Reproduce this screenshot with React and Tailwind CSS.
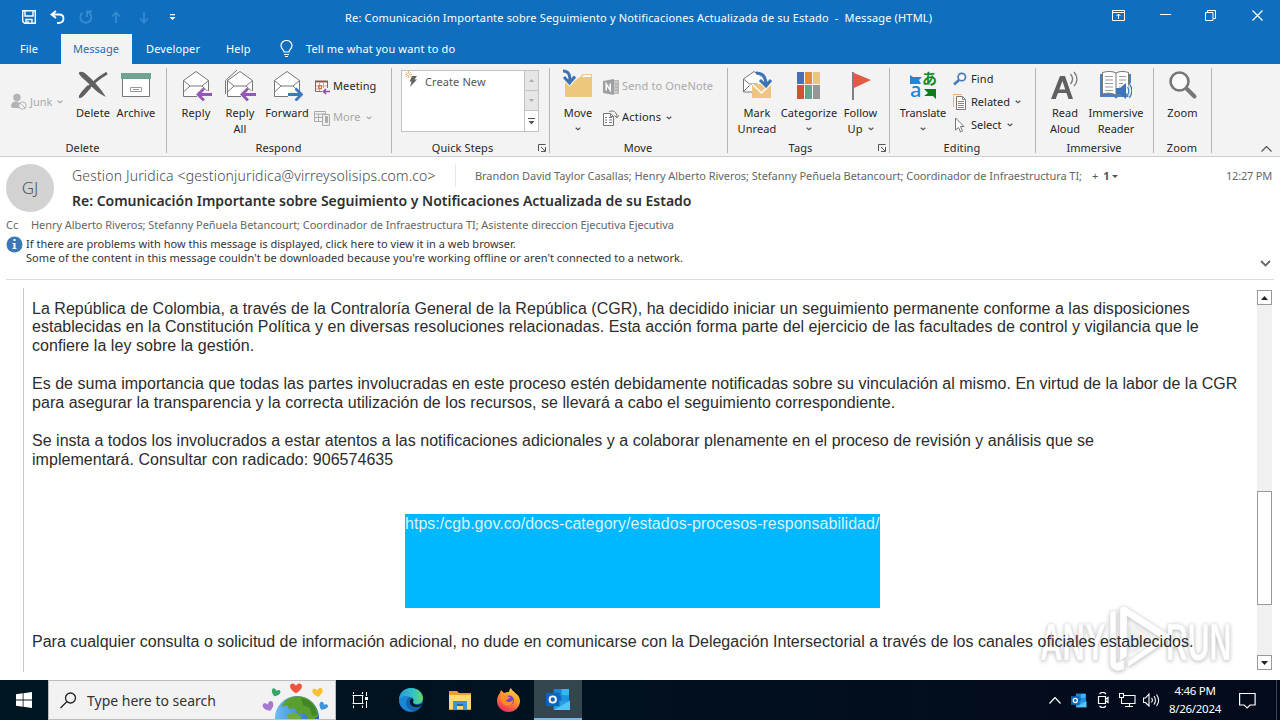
import React from "react";
import clsx from "clsx";

function Caret({ className }) {
  return (
    <svg className={clsx("shrink-0", className)} width="6" height="4" viewBox="0 0 6 4" fill="none" stroke="currentColor" strokeWidth="1.200">
      <path d="M.7.700L3 2.800 5.300.7" />
    </svg>
  );
}

function Launcher() {
  return (
    <svg width="8" height="8" viewBox="0 0 8 8" fill="none" stroke="#555" strokeWidth="1">
      <path d="M.5 7V.5H7.500M3 3l4 4M7.500 3v4.500H3" />
    </svg>
  );
}

function Group({ label, launcher, className, children }) {
  return (
    <div className={clsx("relative flex h-[92px] shrink-0 flex-col", className)}>
      <div className="flex h-[76px] pt-[5px]">{children}</div>
      <div className={clsx("flex h-4 items-center justify-center leading-4", launcher ? "pr-[17px]" : "pr-[2px]")}>{label}</div>
      {launcher && <div className="absolute bottom-[4px] right-[4px]"><Launcher /></div>}
      <div className="absolute right-0 top-1 h-[85px] w-px bg-[#b5b5b5]" />
    </div>
  );
}

function BigButton({ icon, lines, caret, className }) {
  return (
    <div className={clsx("flex shrink-0 flex-col items-center whitespace-nowrap leading-4", className)}>
      <div className="flex h-9 w-8 items-start justify-center">{icon}</div>
      {lines.map((line, i) => (
        <div key={i}>{line}</div>
      ))}
      {caret && <Caret className="mt-[6px] text-[#555]" />}
    </div>
  );
}

function SmallButton({ icon, text, caret, disabled, className }) {
  return (
    <div className={clsx("flex items-center whitespace-nowrap", disabled ? "text-[#a9a9a9]" : "text-[#262626]", className)}>
      <div className="mr-[3px] flex w-4 shrink-0 justify-center">{icon}</div>
      {text}
      {caret && <Caret className={clsx("ml-[5px]", disabled ? "text-[#aaa]" : "text-[#555]")} />}
    </div>
  );
}

function Envelope({ all, forward }) {
  return (
    <svg width="32" height="32" viewBox="0 0 32 32" fill="none">
      {all && <path d="M1.500 25V11.500L13 1" stroke="#777" />}
      <path d="M3.500 11.500L16 2.500l12.500 9V27.500h-25z" fill="#fff" stroke="#777" />
      <path d="M3.500 11.500L10 17h12l6.500-5.500M10 17l-6.500 6M22 17l6.500 6" stroke="#777" />
      <path d="M17 22h15v9H17z" fill="#f3f3f3" />
      {forward ? (
        <path d="M17 25.500h13M24.500 19.500l6 6-6 6" stroke="#3c7abf" strokeWidth="2.800" />
      ) : (
        <path d="M32 25.500H19M24 19.500l-6 6 6 6" stroke="#9359b5" strokeWidth="2.800" />
      )}
    </svg>
  );
}

function DeleteIcon() {
  return (
    <svg width="32" height="32" viewBox="0 0 32 32">
      <path d="M2 5C1 2 6 2 9 5c8 7 14 14 20 23-8-4-12-8-17-13C8 11 5 9 2 5z" fill="#606060" />
      <path d="M3 28C12 18 18 11 30 4" fill="none" stroke="#606060" strokeWidth="2.800" />
      <path d="M2 29c-1-3 4-8 9-13l3 3c-5 5-8 10-12 10z" fill="#606060" />
    </svg>
  );
}

function ArchiveIcon() {
  return (
    <svg width="32" height="32" viewBox="0 0 32 32" fill="none">
      <path d="M2.500 9v18.500h27V9" fill="#fff" stroke="#777" />
      <path d="M1 4h30v6H1z" fill="#6fa392" />
      <path d="M10.500 18.500h11v4h-11zM13 20.500h6" stroke="#999" />
    </svg>
  );
}

function JunkIcon() {
  return (
    <svg width="16" height="18" viewBox="0 0 16 18" fill="#b3b3b3">
      <circle cx="6" cy="4.500" r="3.700" />
      <path d="M0 13c0-3 2-4.500 5-4.500 2 0 3 .5 3 2V15H1z" />
      <circle cx="11.500" cy="12.500" r="3.700" fill="#f3f3f3" stroke="#b3b3b3" />
      <path d="M9 10l5 5" stroke="#b3b3b3" />
    </svg>
  );
}

function MeetingIcon() {
  return (
    <svg width="16" height="16" viewBox="0 0 16 16" fill="none">
      <path d="M1.500 2.500h12v10h-12z" fill="#fff" stroke="#7d6a60" />
      <path d="M1 2.500h13" stroke="#8c5a4a" strokeWidth="2" />
      <path d="M5.500 4v8M9.500 4v8M2 7h11M2 10h11" stroke="#c4a598" />
      <path d="M4.500 6.500h3v3h-3z" stroke="#df6a35" />
      <path d="M8 9h8v7H8z" fill="#f3f3f3" />
      <path d="M16 12.500H9.500M12 10l-2.500 2.500L12 15" stroke="#8c4cab" strokeWidth="1.600" />
    </svg>
  );
}

function MoreIcon() {
  return (
    <svg width="16" height="16" viewBox="0 0 16 16" fill="none" stroke="#aaa">
      <path d="M.5 1.500h11v10H.5zM.5 4h11M4.500 4v7M.5 7.500h9" />
      <path d="M8.500 4.500h7v11h-7z" fill="#eee" />
      <path d="M11.500 6.500h2v6h-2z" fill="#aaa" />
    </svg>
  );
}

function BoltIcon() {
  return (
    <svg width="14" height="17" viewBox="0 0 14 17">
      <path d="M7 5h5L9.500 8.500H12L5 16l1.500-5.500H4.500z" fill="#666" />
      <path d="M3.500 0v7M0 3.500h7M1 1l5 5M6 1L1 6" stroke="#e3a64f" strokeWidth=".8" />
      <circle cx="3.500" cy="3.500" r="1.300" fill="#fff" />
    </svg>
  );
}

function MoveIcon() {
  return (
    <svg width="32" height="32" viewBox="0 0 32 32" fill="none">
      <path d="M3 9h14l4-4h9v23H3z" fill="#edc77b" />
      <path d="M20 8l2-2h7v2z" fill="#fff" />
      <path d="M1 2c6 0 7 4 7 11M2 8l5.500 6L14 7.500" stroke="#f3f3f3" strokeWidth="5" />
      <path d="M1 2c6 0 7 4 7 11M2 8l5.500 6L13 7.500" stroke="#3c73b4" strokeWidth="3" />
    </svg>
  );
}

function OneNoteIcon() {
  return (
    <svg width="16" height="16" viewBox="0 0 16 16" fill="none">
      <path d="M7 1.500h8.500v13H7" fill="#c9c9c9" stroke="#b5b5b5" />
      <path d="M12 5h3.500M12 8h3.500M12 11h3.500" stroke="#a5a5a5" />
      <path d="M0 2l11-2v16L0 14z" fill="#a0a0a0" />
      <path d="M3.200 11.500V5l4 6V4.500" stroke="#fff" strokeWidth="1.500" />
    </svg>
  );
}

function ActionsIcon() {
  return (
    <svg width="16" height="16" viewBox="0 0 16 16" fill="none" stroke="#777">
      <path d="M.5 3.500h7l3 3v9H.5z" fill="#fff" />
      <path d="M7.500 3.500v3h3M2 7.500h2M6 7.500h3M2 10h2M6 10h3M2 12.500h2M6 12.500h3M6 1.500c4-1.500 8 0 8 6M11.500 5.500l2.500 2.500 2-3" />
    </svg>
  );
}

function MarkUnreadIcon() {
  return (
    <svg width="32" height="32" viewBox="0 0 32 32" fill="none">
      <path d="M2.500 10L13 2.500 24 10v10l-9 3H2.500z" fill="#fff" stroke="#777" />
      <path d="M2.500 10l6 5h8M2.500 22.500l6-6" stroke="#777" />
      <path d="M11 15h19v14H11z" fill="#edc481" />
      <path d="M11 15l9.500 9 9.500-9" stroke="#fff" strokeWidth="1.500" />
      <path d="M16 4c6 0 9 4 9 12M19 11l6 6 5-6" stroke="#f3f3f3" strokeWidth="5" />
      <path d="M15 4c7 0 10 4 10 12M19 11l6 6 5-6" stroke="#3c73b4" strokeWidth="3" />
    </svg>
  );
}

function CategorizeIcon() {
  return (
    <svg width="24" height="30" viewBox="0 0 24 30">
      <path d="M0 3h7v12H0z" fill="#4672ad" />
      <path d="M8 3h7v12H8z" fill="#e78a39" />
      <path d="M16 3h7v12h-7z" fill="#ebc67b" />
      <path d="M0 16h7v14H0z" fill="#d0503a" />
      <path d="M8 16h7v14H8z" fill="#68a28e" />
      <path d="M16 16h7v14h-7z" fill="#969696" />
    </svg>
  );
}

function FlagIcon() {
  return (
    <svg width="22" height="31" viewBox="0 0 22 31">
      <path d="M2 3h2v28H2z" fill="#808080" />
      <path d="M4 4l17 7-17 8z" fill="#e15a42" />
    </svg>
  );
}

function TranslateIcon() {
  return (
    <div className="relative h-8 w-8 shrink-0 leading-none">
      <span className="absolute left-[15px] top-[1px] font-['Noto_Sans_CJK_JP',sans-serif] text-[15px] font-bold text-[#118a24]">あ</span>
      <span className="absolute left-[3px] top-[11px] text-[20px] font-medium text-[#1e84e0]">a</span>
      <svg className="absolute left-0 top-0" width="32" height="32" viewBox="0 0 32 32">
        <path d="M3 6l3 2h9l-3 3 2 4H3z" fill="#1e84e0" />
        <path d="M17 20h12v10l-3-3h-9l4-3z" fill="#0c7d1e" />
      </svg>
    </div>
  );
}

function FindIcon() {
  return (
    <svg width="14" height="14" viewBox="0 0 14 14" fill="none" stroke="#457bb9" strokeWidth="1.700">
      <circle cx="8.800" cy="5" r="3.700" fill="#fff" />
      <path d="M6 8L1 12.500" strokeWidth="2.500" />
    </svg>
  );
}

function RelatedIcon() {
  return (
    <svg width="14" height="16" viewBox="0 0 14 16" fill="none">
      <path d="M.5 13V.5H9" stroke="#e7b27e" />
      <path d="M3.500 2.500h6l3 3v10h-9z" fill="#fff" stroke="#777" />
      <path d="M9.500 2.500v3h3M5 7.500h6M5 9.500h6M5 11.500h6M5 13.500h6" stroke="#888" />
    </svg>
  );
}

function SelectIcon() {
  return (
    <svg width="12" height="16" viewBox="0 0 12 16">
      <path d="M1.500 1v12l3-2.500 2 4.500 2-1-2-4.500H10z" fill="#fff" stroke="#777" />
    </svg>
  );
}

function ReadAloudIcon() {
  return (
    <svg width="32" height="32" viewBox="0 0 32 32" fill="none">
      <path d="M2 30L11 7h5l8 23h-4.500l-2-6H9l-2.300 6zM10.300 20.500h6L13.400 12z" fill="#606060" fillRule="evenodd" />
      <path d="M21.500 5c2.500 3 2.500 7 0 10M25 3c4 4.500 4 10 0 14" stroke="#777" strokeWidth="1.300" />
    </svg>
  );
}

function ReaderIcon() {
  return (
    <svg width="32" height="32" viewBox="0 0 32 32" fill="none">
      <path d="M0 5h31v23H18l-2 1.500L14 28H0z" fill="#4a80bd" />
      <path d="M2.500 3.500c5-1.500 10-1.500 13.500.5C19.500 2 24 2 28.500 3.500V25c-5-1.500-9-1-12.500 1-4-2-8.500-2.500-13.500-1z" fill="#fff" stroke="#777" />
      <path d="M16 4v22" stroke="#777" />
      <path d="M5 7.500h8M5 11h8M5 14.500h8M5 18h8M5 21.500h8M19 7.500h7M19 11h7M19 14.500h4M19 18h1" stroke="#999" />
      <path d="M16 19h4l6-5v16l-6-5h-4z" fill="#3d75b6" />
      <path d="M27.500 18c2 3 2 5 0 8M29.500 15c3 4 3 9 0 14" stroke="#f3f3f3" strokeWidth="3" />
      <path d="M27.500 18c2 3 2 5 0 8M29.500 15c3 4 3 9 0 14" stroke="#3d75b6" strokeWidth="1.200" />
    </svg>
  );
}

function ZoomIcon() {
  return (
    <svg width="32" height="32" viewBox="0 0 32 32" fill="none" stroke="#777">
      <path d="M20 20l7.500 7.500" strokeWidth="4" strokeLinecap="round" />
      <circle cx="12.500" cy="12.500" r="9" fill="#fafafa" strokeWidth="2.600" />
    </svg>
  );
}

function OutlookIcon({ className }) {
  return (
    <svg className={className} viewBox="0 0 26 24" fill="none">
      <path d="M8 1h16v19H8z" fill="#1467b4" />
      <path d="M8 1h8v7H8z" fill="#1d83d4" />
      <path d="M16 1h8v7h-8z" fill="#37b6f2" />
      <path d="M16 8h8v7h-8z" fill="#1c93e2" />
      <path d="M8 12l17 3v8H8z" fill="#2c9ce0" />
      <path d="M8 23l17-10v10z" fill="#54c4f5" />
      <path d="M0 5h14v14H0z" fill="#0b65b8" />
      <circle cx="7" cy="12" r="3.300" stroke="#fff" strokeWidth="2" />
    </svg>
  );
}

function TitleBar() {
  return (
    <div className="flex h-[34px] items-center text-white">
      <div className="flex w-[345px] shrink-0 items-center pl-[22px]">
        <svg width="14" height="14" viewBox="0 0 14 14" fill="none" stroke="#fff" strokeWidth="1.400">
          <path d="M.7.700h12.600v12.600H2.500L.7 11.500zM3 1v5h8V1M4 13V9.500h6V13M6 11v2" />
        </svg>
        <svg className="ml-[14px]" width="15" height="15" viewBox="0 0 15 15" fill="none" stroke="#fff" strokeWidth="1.800">
          <path d="M6 1L1.500 4.500 6 8M2 4.500h7c6 0 6 8 0 8.500H7" />
        </svg>
        <svg className="ml-[14px] text-[#398bd0]" width="14" height="14" viewBox="0 0 14 14" fill="none" stroke="currentColor" strokeWidth="1.800">
          <path d="M8.500 2A5.500 5.500 0 1 1 3.500 2.800M8 7V1.500h5" />
        </svg>
        <svg className="ml-[18px] text-[#398bd0]" width="10" height="13" viewBox="0 0 10 13" fill="none" stroke="currentColor" strokeWidth="1.700">
          <path d="M5 12V1.500M1 5.500l4-4 4 4" />
        </svg>
        <svg className="ml-[18px] text-[#398bd0]" width="10" height="13" viewBox="0 0 10 13" fill="none" stroke="currentColor" strokeWidth="1.700">
          <path d="M5 1v10.500M1 7.500l4 4 4-4" />
        </svg>
        <svg className="ml-[20px]" width="7" height="7" viewBox="0 0 7 7" fill="#fff">
          <path d="M1 0h5v1.200H1zM.5 3h6l-3 3z" />
        </svg>
      </div>
      <div className="w-[767px] shrink-0 whitespace-pre pt-[2px] text-[11px] tracking-[0.165px]">
        Re: Comunicación Importante sobre Seguimiento y Notificaciones Actualizada de su Estado  -  Message (HTML)
      </div>
      <svg className="mb-1" width="13" height="11" viewBox="0 0 13 11" fill="none" stroke="#fff">
        <path d="M.5.500h12v10H.5zM.5 2.500h12M6.500 9V4M4.500 6l2-2 2 2" />
      </svg>
      <div className="mb-[5px] ml-[35px] h-px w-[11px] bg-white" />
      <svg className="mb-1 ml-[34px]" width="11" height="11" viewBox="0 0 11 11" fill="none" stroke="#fff">
        <path d="M.5 2.500h7.500v8H.5zM2.500 2.500v-2h8v8H8.500" />
      </svg>
      <svg className="mb-1 ml-[36px]" width="11" height="11" viewBox="0 0 11 11" fill="none" stroke="#fff" strokeWidth="1.200">
        <path d="M.5.500l10 10M10.500.500l-10 10" />
      </svg>
    </div>
  );
}

function Tabs() {
  return (
    <div className="flex h-[30px] whitespace-nowrap text-[11px] leading-[30px] tracking-[0.15px] text-white">
      <div className="w-[61px] pl-[20px]">File</div>
      <div className="w-[71px] bg-[#f3f3f3] pr-px text-center text-[#1f6cb4] tracking-normal">Message</div>
      <div className="w-[94px] pl-[14px]">Developer</div>
      <div className="w-[54px]">Help</div>
      <svg className="mt-[6px]" width="13" height="18" viewBox="0 0 13 18" fill="none" stroke="#fff" strokeWidth="1.200">
        <path d="M4 12c0-2.500-3-3-3-6.500a5.500 5 0 0 1 11 0C12 9 9 9.500 9 12zM4 14.500h5M5 16.500h3" />
      </svg>
      <div className="pl-[13px]">Tell me what you want to do</div>
    </div>
  );
}

function Ribbon() {
  return (
    <div className="flex h-[93px] border-b border-[#d0d0d0] bg-[#f3f3f3] text-[11px] tracking-[0.1px] text-[#262626]">
      <Group label="Delete" className="w-[167px]">
        <SmallButton icon={<JunkIcon />} text="Junk" caret disabled className="mt-[-5px] w-[59px] pl-[11px] tracking-normal" />
        <BigButton icon={<DeleteIcon />} lines={["Delete"]} className="ml-[12px] w-[44px]" />
        <BigButton icon={<ArchiveIcon />} lines={["Archive"]} className="ml-[-1px] w-[44px]" />
      </Group>
      <Group label="Respond" className="w-[225px]">
        <BigButton icon={<Envelope />} lines={["Reply"]} className="ml-[7px] w-[44px]" />
        <BigButton icon={<Envelope all />} lines={["Reply", "All"]} className="w-[44px]" />
        <BigButton icon={<Envelope forward />} lines={["Forward"]} className="w-[50px]" />
        <div className="ml-[2px] flex flex-col pt-[2px]">
          <SmallButton icon={<MeetingIcon />} text="Meeting" className="h-[31px]" />
          <SmallButton icon={<MoreIcon />} text="More" caret disabled className="h-[31px]" />
        </div>
      </Group>
      <Group label="Quick Steps" launcher className="w-[158px]">
        <div className="ml-[9px] mt-px flex h-[62px] w-[138px] border border-[#c3c3c3] bg-white">
          <div className="flex flex-1 items-start pl-[3px] text-[#555]">
            <BoltIcon />
            <span className="ml-[6px] mt-[3px] whitespace-nowrap leading-4">Create New</span>
          </div>
          <div className="flex w-[14px] flex-col border-l border-[#c3c3c3]">
            <div className="flex h-[20px] items-center justify-center border-b border-[#c3c3c3] bg-[#e6e6e6]">
              <svg width="5" height="3" viewBox="0 0 5 3" fill="#aaa"><path d="M0 3L2.500 0 5 3z" /></svg>
            </div>
            <div className="flex h-[20px] items-center justify-center border-b border-[#c3c3c3] bg-[#e6e6e6]">
              <svg width="5" height="3" viewBox="0 0 5 3" fill="#aaa"><path d="M0 0h5L2.500 3z" /></svg>
            </div>
            <div className="flex flex-1 items-center justify-center">
              <svg width="7" height="7" viewBox="0 0 7 7" fill="#555"><path d="M0 0h7v1H0zM.5 3h6l-3 3.500z" /></svg>
            </div>
          </div>
        </div>
      </Group>
      <Group label="Move" className="w-[178px]">
        <BigButton icon={<MoveIcon />} lines={["Move"]} caret className="ml-[8px] w-[40px]" />
        <div className="ml-[5px] flex flex-col pt-[2px]">
          <SmallButton icon={<OneNoteIcon />} text="Send to OneNote" disabled className="h-[31px] tracking-[0.15px]" />
          <SmallButton icon={<ActionsIcon />} text="Actions" caret className="h-[31px] tracking-[0.2px]" />
        </div>
      </Group>
      <Group label="Tags" launcher className="w-[162px]">
        <BigButton icon={<MarkUnreadIcon />} lines={["Mark", "Unread"]} className="ml-[7px] w-[44px]" />
        <BigButton icon={<CategorizeIcon />} lines={["Categorize"]} caret className="w-[60px]" />
        <BigButton
          icon={<FlagIcon />}
          lines={["Follow", <span className="flex items-center gap-[5px]">Up <Caret className="text-[#555]" /></span>]}
          className="w-[43px]"
        />
      </Group>
      <Group label="Editing" className="w-[146px]">
        <BigButton icon={<TranslateIcon />} lines={["Translate"]} caret className="ml-[8px] w-[50px] tracking-[-0.1px]" />
        <div className="ml-[4px] flex flex-col">
          <SmallButton icon={<FindIcon />} text="Find" className="h-[20px]" />
          <SmallButton icon={<RelatedIcon />} text="Related" caret className="mt-[3px] h-[20px] tracking-normal" />
          <SmallButton icon={<SelectIcon />} text="Select" caret className="mt-[3px] h-[20px] tracking-normal" />
        </div>
      </Group>
      <Group label="Immersive" className="w-[118px] tracking-normal">
        <BigButton icon={<ReadAloudIcon />} lines={["Read", "Aloud"]} className="ml-[9px] w-[40px]" />
        <BigButton icon={<ReaderIcon />} lines={["Immersive", "Reader"]} className="w-[62px]" />
      </Group>
      <Group label="Zoom" className="w-[58px]">
        <BigButton icon={<ZoomIcon />} lines={["Zoom"]} className="w-[57px]" />
      </Group>
      <div className="flex flex-1 items-end justify-end pb-[4px] pr-[8px]">
        <svg width="11" height="6" viewBox="0 0 11 6" fill="none" stroke="#555" strokeWidth="1.200">
          <path d="M.5 5.500l5-5 5 5" />
        </svg>
      </div>
    </div>
  );
}

function MessageHeader() {
  return (
    <div className="flex h-[123px] flex-col whitespace-nowrap text-[11px] text-[#666]">
      <div className="flex h-[60px]">
        <div className="ml-[6px] mt-[7px] flex h-12 w-12 items-center justify-center rounded-full bg-[#d2d2d2] text-[17px] font-light text-[#555]">
          GJ
        </div>
        <div className="ml-[18px] flex-1">
          <div className="flex h-[36px] items-center">
            <div className="w-[383px] text-[14px] font-light tracking-[0.16px] text-[#4a4a4a]">
              Gestion Juridica &lt;gestionjuridica@virreysolisips.com.co&gt;
            </div>
            <div className="h-[23px] w-px bg-[#e8e8e8]" />
            <div className="w-[615px] pl-[19px] pt-[3px] tracking-[-0.055px]">
              Brandon David Taylor Casallas; Henry Alberto Riveros; Stefanny Peñuela Betancourt; Coordinador de Infraestructura TI;
            </div>
            <div className="flex items-center pl-[21px] pt-[3px] text-[#555]">
              +<b className="ml-[5px]">1</b>
              <svg className="ml-[2px]" width="6" height="4" viewBox="0 0 6 4" fill="#555"><path d="M0 0h6L3 3z" /></svg>
            </div>
            <div className="ml-auto pr-[8px] pt-[3px] tracking-[-0.2px]">12:27 PM</div>
          </div>
          <div className="text-[14px] font-semibold leading-4 tracking-[-0.012px] text-[#2f2f2f]">
            Re: Comunicación Importante sobre Seguimiento y Notificaciones Actualizada de su Estado
          </div>
        </div>
      </div>
      <div className="flex h-[16px] items-center pl-[6px]">
        <div className="w-[25px]">Cc</div>
        <div className="tracking-[-0.055px]">
          Henry Alberto Riveros; Stefanny Peñuela Betancourt; Coordinador de Infraestructura TI; Asistente direccion Ejecutiva Ejecutiva
        </div>
      </div>
      <div className="flex pl-[6px] pt-[3px] text-[#333]">
        <svg className="mr-[3px]" width="17" height="17" viewBox="0 0 17 17">
          <circle cx="8.500" cy="8.500" r="8" fill="#3c78b5" />
          <path d="M7.500 3h2v2h-2zM6.500 7h3v5h1v1h-4v-1h1V8h-1z" fill="#fff" />
        </svg>
        <div className="flex-1 pt-[1px] leading-[14px]">
          <div className="tracking-[0.012px]">If there are problems with how this message is displayed, click here to view it in a web browser.</div>
          <div className="tracking-[0.052px]">Some of the content in this message couldn't be downloaded because you're working offline or aren't connected to a network.</div>
        </div>
        <svg className="mr-[9px] mt-[24px]" width="11" height="8" viewBox="0 0 11 8" fill="none" stroke="#666" strokeWidth="1.800">
          <path d="M1 1l4.500 4.500L10 1" />
        </svg>
      </div>
      <div className="mb-0 ml-[6px] mr-[6px] mt-auto h-px bg-[#dcdcdc]" />
    </div>
  );
}

function Watermark() {
  return (
    <div className="absolute left-[1036px] top-[321px] h-[72px] w-[204px] opacity-80">
      <svg className="drop-shadow-[0_1px_2px_rgba(0,0,0,0.35)]" width="204" height="72" viewBox="0 0 204 72">
        <g fill="#fff" stroke="#e4e4e4" strokeWidth=".6" fontFamily="Liberation Sans, sans-serif" fontWeight="bold" fontSize="52">
          <text transform="translate(4 59) scale(.6 1)">ANY</text>
          <text transform="translate(130 59) scale(.58 1)">RUN</text>
          <path d="M74 63V13q0-3 3-3l3-1V62l8-3v9q-6 3-9 1-5-2-5-6z" />
          <path d="M84 60V8q1-4 6-2l42 27q3 3 0 6L92 66v-6l33-23-34-22v40z" fillRule="evenodd" />
          <path d="M95 24l20 13-20 13z" fillOpacity=".6" />
        </g>
      </svg>
    </div>
  );
}

function MessageBody() {
  return (
    <div className="relative flex h-[400px] pb-2 pt-2">
      <Watermark />
      <div className="relative ml-[23px] w-[1234px] whitespace-nowrap border-l border-[#c8c8c8] pl-[8px] pt-[11px] font-['Liberation_Sans',Arial,sans-serif] text-[16px] leading-[19px] text-[#2c2c2c]">
        <div className="h-[75px]">
          <div className="h-[18px] tracking-[0.033px]">La República de Colombia, a través de la Contraloría General de la República (CGR), ha decidido iniciar un seguimiento permanente conforme a las disposiciones</div>
          <div className="h-[19px] tracking-[0.026px]">establecidas en la Constitución Política y en diversas resoluciones relacionadas. Esta acción forma parte del ejercicio de las facultades de control y vigilancia que le</div>
          <div className="tracking-[0.05px]">confiere la ley sobre la gestión.</div>
        </div>
        <div className="h-[57px]">
          <div className="tracking-[0.018px]">Es de suma importancia que todas las partes involucradas en este proceso estén debidamente notificadas sobre su vinculación al mismo. En virtud de la labor de la CGR</div>
          <div className="tracking-[0.04px]">para asegurar la transparencia y la correcta utilización de los recursos, se llevará a cabo el seguimiento correspondiente.</div>
        </div>
        <div className="h-[83px]">
          <div className="tracking-[0.024px]">Se insta a todos los involucrados a estar atentos a las notificaciones adicionales y a colaborar plenamente en el proceso de revisión y análisis que se</div>
          <div className="tracking-[0.04px]">implementará. Consultar con radicado: 906574635</div>
        </div>
        <div className="ml-[373px] h-[94px] w-[475px] bg-[#00b8ff] tracking-[0.024px] text-[#d9f3ff]">
          htps:/cgb.gov.co/docs-category/estados-procesos-responsabilidad/
        </div>
        <div className="mt-[24px] tracking-[0.01px]">Para cualquier consulta o solicitud de información adicional, no dude en comunicarse con la Delegación Intersectorial a través de los canales oficiales establecidos.</div>
      </div>
      <div className="mt-[2px] flex h-[380px] w-[15px] flex-col bg-[#f0f0f0]">
        <div className="flex h-[15px] items-center justify-center border border-[#999] bg-white">
          <svg width="7" height="4" viewBox="0 0 7 4"><path d="M0 4l3.500-4L7 4z" fill="#222" /></svg>
        </div>
        <div className="mt-[186px] h-[114px] border border-[#999] bg-white" />
        <div className="mt-auto flex h-[15px] items-center justify-center border border-[#999] bg-white">
          <svg width="7" height="4" viewBox="0 0 7 4"><path d="M0 0h7L3.500 4z" fill="#222" /></svg>
        </div>
      </div>
    </div>
  );
}

function Globe() {
  const heart = "M0 2.500C-2-1-6 0-5 4c1 3 5 5 5 5s4-2 5-5c1-4-3-5-5-1.500z";
  return (
    <svg className="mr-[4px]" width="70" height="38" viewBox="0 0 70 38">
      <defs>
        <linearGradient id="sea" x1="0" x2="1">
          <stop offset="0" stopColor="#69bdf5" />
          <stop offset="1" stopColor="#2765bd" />
        </linearGradient>
      </defs>
      <circle cx="36" cy="37" r="22" fill="url(#sea)" />
      <path d="M24 20c6-6 17-6 23-2 6 4 10 10 10 17l-4 3h-6l-3-6-7 1-3-6-6 1-2-4-6 2z" fill="#5a9e2f" />
      <path d="M40 17c9 1 15 8 16 17l-5 1-2-8-7-3z" fill="#3f8626" />
      <path d="M26 34l7-3 6 4 2 4H28z" fill="#6fae38" />
      <path d={heart} fill="#f0533f" transform="translate(35 2) scale(1.15)" />
      <path d={heart} fill="#36a56b" transform="translate(16 8) rotate(20) scale(.85)" />
      <path d={heart} fill="#f8c22f" transform="translate(56 7) rotate(-10)" />
      <path d={heart} fill="#a679cf" transform="translate(6 21) rotate(-20) scale(1.050)" />
      <path d={heart} fill="#3895de" transform="translate(64 22) rotate(30) scale(.85)" />
    </svg>
  );
}

function Taskbar() {
  return (
    <div className="flex h-10 items-center bg-linear-to-r from-[#001721] to-[#030a1c] text-white">
      <div className="flex w-12 justify-center">
        <svg width="16" height="16" viewBox="0 0 16 16" fill="#fff">
          <path d="M0 2.300L6.700 1.300V7.500H0zM7.500 1.200L16 0v7.500H7.500zM0 8.500h6.700v6.200L0 13.700zM7.500 8.500H16V16l-8.500-1.200z" />
        </svg>
      </div>
      <div className="flex h-10 w-[288px] items-center border border-[#b9bdbf] bg-[#f2f2f2] pl-[11px] text-[#333]">
        <svg width="17" height="17" viewBox="0 0 17 17" fill="none" stroke="#222" strokeWidth="1.300">
          <circle cx="10.500" cy="6" r="5" />
          <path d="M7 9.500L.5 16" />
        </svg>
        <div className="ml-[10px] flex-1 whitespace-nowrap text-[14px]">Type here to search</div>
        <Globe />
      </div>
      <div className="flex w-[48px] justify-center">
        <svg width="17" height="16" viewBox="0 0 17 16" fill="none" stroke="#fff">
          <path d="M1.500 0v2M10.500 0v2M.5 3.500h11M1.500 4v8M10.500 4v8M.5 11.500h11M1.500 13.500V16M10.500 13.500V16M14.500 0v4M14.500 9v7" />
          <path d="M13 5h3v3h-3z" fill="#fff" stroke="none" />
        </svg>
      </div>
      <div className="flex w-[54px] justify-center">
        <svg width="24" height="24" viewBox="0 0 24 24">
          <defs>
            <linearGradient id="edge" x1="0" x2="1">
              <stop offset="0" stopColor="#229bdd" />
              <stop offset=".6" stopColor="#35c4c2" />
              <stop offset="1" stopColor="#61d66b" />
            </linearGradient>
          </defs>
          <circle cx="12" cy="12" r="12" fill="#1263ad" />
          <path d="M0 12C0 5 5 0 12 0c8 0 12 6 12 10 0 5-4 6-6 6-3 0-4-1-4-2 1-1 1-5-3-5-5-1-9 0-11 3z" fill="url(#edge)" />
          <path d="M9 10c-4 5-1 12 6 13-8 2-15-4-15-11 2-4 7-5 10-3z" fill="#1b86d4" />
          <path d="M14 14c0 3 5 4 9 1.500 0 2-3 3.500-6 3.500-5 0-8-5-5-8 2-1 3 1 2 3z" fill="#001721" />
        </svg>
      </div>
      <div className="flex w-[44px] justify-center">
        <svg width="22" height="19" viewBox="0 0 22 19">
          <path d="M0 0h8l2 2h12v17H0z" fill="#e7a22e" />
          <path d="M0 4h22v14H0z" fill="#ffda70" />
          <path d="M4 10h14v9h-4v-4H8v4H4z" fill="#3f96cf" />
          <path d="M8 13h6v2H8z" fill="#1d6ba6" />
        </svg>
      </div>
      <div className="flex w-[52px] justify-center">
        <svg width="23" height="24" viewBox="0 0 23 24">
          <defs>
            <linearGradient id="fox" x1=".8" y1="0" x2=".3" y2="1">
              <stop offset="0" stopColor="#ffe13d" />
              <stop offset=".45" stopColor="#ff9330" />
              <stop offset="1" stopColor="#ed285d" />
            </linearGradient>
          </defs>
          <path d="M3 5l1-3 3 3c2-1 4-1 5-1 0-2 1-3 2-4 1 4 9 6 9 13 0 6-5 11-11.500 11S0 19 0 13c0-3 1-6 3-8z" fill="url(#fox)" />
          <circle cx="12" cy="12.500" r="5" fill="#7a42ce" />
          <path d="M4 8c4-2 6 1 9 1-1 3-4 2-4 4 2 2 5 1 7-1 0 5-4 7-8 5-3-1-5-5-4-9z" fill="#ff8b2b" />
        </svg>
      </div>
      <div className="flex h-10 w-[48px] items-center justify-center border-b-2 border-[#76b9ed] bg-[#34454e]">
        <OutlookIcon className="h-[23px] w-[25px]" />
      </div>
      <div className="ml-auto flex h-10 items-center">
        <svg width="12" height="7" viewBox="0 0 12 7" fill="none" stroke="#fff" strokeWidth="1.200"><path d="M.5 6.500l5.500-6 5.500 6" /></svg>
        <OutlookIcon className="ml-[10px] h-[15px] w-[16px]" />
        <svg className="ml-[10px]" width="14" height="16" viewBox="0 0 14 16" fill="none" stroke="#fff" strokeWidth="1.200">
          <path d="M1.500 4.500h7v7h-7zM8.500 7.500l2.500-2v5l-2.500-2M2.500 2c2-2 4.500-2 6.500 0M2.500 14c2 2 4.500 2 6.500 0" />
        </svg>
        <svg className="ml-[8px]" width="17" height="14" viewBox="0 0 17 14" fill="none" stroke="#fff" strokeWidth="1.100">
          <path d="M5 2.500h11v8H5M10.500 10.500v3M6 13.500h8M.5.500h4v4h-4zM2.500 4.500v6h3" />
        </svg>
        <svg className="ml-[7px]" width="17" height="14" viewBox="0 0 17 14" fill="none" stroke="#fff" strokeWidth="1.100">
          <path d="M.5 5h2l3.500-4v12L2.500 9.500h-2zM8.500 5c1 1 1 3 0 4.500M11 3c2 3 2 5.500 0 8.500M13.500 1.500c3 4 3 7.500 0 11.500" />
        </svg>
        <div className="w-[70px] whitespace-nowrap text-center text-[11.500px] leading-[18px] tracking-[-0.3px]">
          <div>4:46 PM</div>
          <div>8/26/2024</div>
        </div>
        <svg className="ml-[9px]" width="17" height="17" viewBox="0 0 17 17" fill="none" stroke="#fff" strokeWidth="1.200">
          <path d="M.6 1.500h15.500v11.500h-5l-3 3-3-3H.6z" />
        </svg>
        <div className="ml-[20px] mr-[3px] h-10 w-px bg-[#3c4450]" />
      </div>
    </div>
  );
}

export default function App() {
  return (
    <div className="flex h-[720px] w-[1280px] flex-col overflow-hidden bg-white font-['Noto_Sans','Open_Sans',sans-serif]">
      <div className="bg-[#106ebe]">
        <TitleBar />
        <Tabs />
      </div>
      <Ribbon />
      <MessageHeader />
      <MessageBody />
      <Taskbar />
    </div>
  );
}
